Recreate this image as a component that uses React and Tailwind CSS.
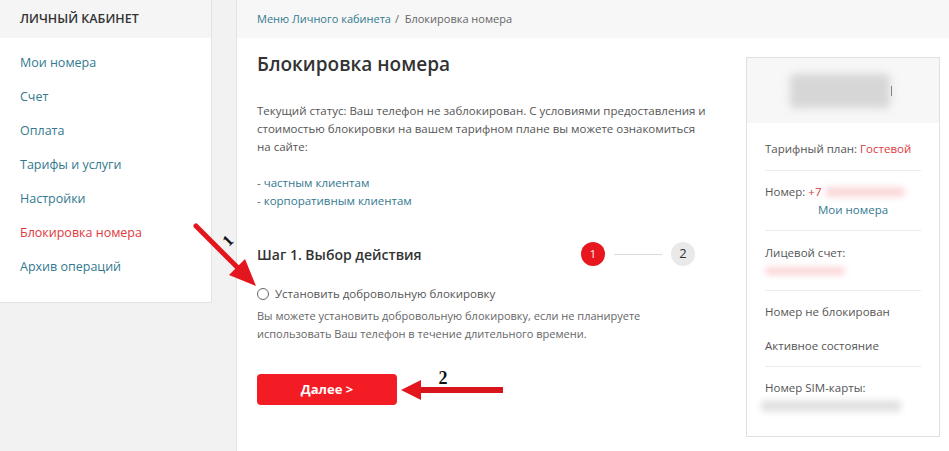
import React from 'react';

const menu = [
    { label: 'Мои номера' },
    { label: 'Счет' },
    { label: 'Оплата' },
    { label: 'Тарифы и услуги' },
    { label: 'Настройки' },
    { label: 'Блокировка номера', active: true },
    { label: 'Архив операций' },
];

const Sidebar = () => (
    <aside className="w-[212px] self-start bg-white border-r border-b border-[#e3e3e3]">
        <div className="h-[38px] bg-[#f5f5f5] px-5 flex items-center text-[12.5px] font-semibold text-[#333] uppercase">
            Личный кабинет
        </div>
        <ul className="pt-[8px] pb-[18px]">
            {menu.map((item) => (
                <li
                    key={item.label}
                    className={`h-[34px] px-5 flex items-center text-[12.5px] ${item.active ? 'text-[#e0393e]' : 'text-[#33798f]'}`}
                >
                    {item.label}
                </li>
            ))}
        </ul>
    </aside>
);

const Divider = () => <div className="h-px bg-[#ebebeb]" />;

const InfoCard = () => (
    <div className="w-[194px] mt-[19px] mr-[9px] h-[380px] border border-[#e0e0e0] bg-white text-[11.5px] text-[#555] leading-[18px]">
        {/* Header with hidden name */}
        <div className="h-[65px] bg-[#f7f7f7] flex items-center pl-[43px]">
            <div className="w-[100px] h-[34px] bg-[#d6d6d6] rounded blur-[4px]" />
            <div className="w-px h-[10px] bg-[#555] ml-px" />
        </div>

        <div className="px-[18px]">
            <div className="pt-[17px] pb-[12px]">
                Тарифный план: <span className="text-[#e0393e]">Гостевой</span>
            </div>
            <Divider />
            <div className="pt-[12px] pb-[11px]">
                <div className="flex items-center">
                    <span>Номер:&nbsp;</span>
                    <span className="text-[#e0393e]">+7</span>
                    <span className="ml-[3px] w-[80px] h-[10px] bg-[#fbd8da] rounded blur-[3px]" />
                </div>
                <div className="pl-[53px] text-[#33798f]">Мои номера</div>
            </div>
            <Divider />
            <div className="pt-[13px] pb-[10px]">
                <div>Лицевой счет:</div>
                <div className="h-[18px] flex items-center">
                    <span className="w-[80px] h-[8px] bg-[#fbd5d8] rounded blur-[3px]" />
                </div>
            </div>
            <Divider />
            <div className="pt-[12px] pb-[11px]">
                <div className="h-[18px]">Номер не блокирован</div>
                <div className="h-[18px] mt-[16px]">Активное состояние</div>
            </div>
            <Divider />
            <div className="pt-[12px]">
                <div>Номер SIM-карты:</div>
                <div className="h-[18px] flex items-center -ml-[4px]">
                    <span className="w-[140px] h-[12px] bg-[#e2e2e2] rounded blur-[3px]" />
                </div>
            </div>
        </div>
    </div>
);

const Annotations = () => (
    <svg className="absolute inset-0 pointer-events-none" width="949" height="451" viewBox="0 0 949 451">
        {/* arrow 1 */}
        <line x1="196" y1="226" x2="240" y2="270" stroke="#e3161e" strokeWidth="5" strokeLinecap="round" />
        <polygon points="256,286 229,275 245,259" fill="#e3161e" />
        <text
            x="228"
            y="246"
            transform="rotate(-45 228 241)"
            fontFamily="Liberation Serif, serif"
            fontWeight="bold"
            fontSize="16"
            fill="#111"
            textAnchor="middle"
        >
            1
        </text>
        {/* arrow 2 */}
        <line x1="503" y1="390" x2="418" y2="390" stroke="#d9151c" strokeWidth="6" />
        <polygon points="401,390 421,380 421,400" fill="#e3161e" />
        <text
            x="443"
            y="384"
            fontFamily="Liberation Serif, serif"
            fontWeight="bold"
            fontSize="18"
            fill="#111"
            textAnchor="middle"
        >
            2
        </text>
    </svg>
);

const App = () => {
    return (
        <div
            className="relative flex w-[949px] h-[451px] overflow-hidden bg-[#f2f2f2]"
            style={{ fontFamily: '"Open Sans", "Noto Sans", sans-serif' }}
        >
            <Sidebar />

            <main className="ml-[24px] flex-1 flex flex-col bg-white border-l border-[#e3e3e3]">
                {/* Breadcrumbs */}
                <div className="h-[38px] shrink-0 bg-[#f7f7f7] px-5 flex items-center text-[11px]">
                    <span className="text-[#33798f]">Меню Личного кабинета</span>
                    <span className="text-[#666] ml-[4px]">/&nbsp;&nbsp;Блокировка номера</span>
                </div>

                <div className="flex justify-between">
                    {/* Content */}
                    <div className="pl-5 w-[480px]">
                        <h1 className="mt-[12px] text-[19px] leading-[28px] font-semibold text-[#333]">
                            Блокировка номера
                        </h1>

                        <p className="mt-[24px] text-[11.5px] leading-[18px] text-[#555] whitespace-nowrap">
                            Текущий статус: Ваш телефон не заблокирован. С условиями предоставления и
                            <br />
                            стоимостью блокировки на вашем тарифном плане вы можете ознакомиться
                            <br />
                            на сайте:
                        </p>

                        <div className="mt-[18px] text-[11.5px] leading-[18px] text-[#666]">
                            <div>- <span className="text-[#33798f]">частным клиентам</span></div>
                            <div>- <span className="text-[#33798f]">корпоративным клиентам</span></div>
                        </div>

                        {/* Step header */}
                        <div className="mt-[32px] h-[24px] w-[438px] flex items-center">
                            <h2 className="flex-1 text-[14px] font-semibold text-[#333]">
                                Шаг 1. Выбор действия
                            </h2>
                            <span className="w-[24px] h-[24px] rounded-full bg-[#e8161e] text-white text-[11px] flex items-center justify-center">
                                1
                            </span>
                            <span className="w-[48px] h-px bg-[#d9d9d9] mx-[9px]" />
                            <span className="w-[24px] h-[24px] rounded-full bg-[#e9e9e9] text-[#333] text-[13px] flex items-center justify-center">
                                2
                            </span>
                        </div>

                        {/* Option */}
                        <label className="mt-[19px] h-[18px] flex items-center text-[11.5px] text-[#555]">
                            <span className="w-[12px] h-[12px] rounded-full border border-[#666] bg-white mr-[6px]" />
                            Установить добровольную блокировку
                        </label>
                        <p className="mt-[4px] text-[11px] leading-[18px] text-[#666]">
                            Вы можете установить добровольную блокировку, если не планируете
                            <br />
                            использовать Ваш телефон в течение длительного времени.
                        </p>

                        <button className="mt-[31px] w-[140px] h-[31px] rounded bg-[#f31b24] text-white text-[13px] font-bold">
                            Далее &gt;
                        </button>
                    </div>

                    <InfoCard />
                </div>
            </main>

            <Annotations />
        </div>
    );
};

export default App;
